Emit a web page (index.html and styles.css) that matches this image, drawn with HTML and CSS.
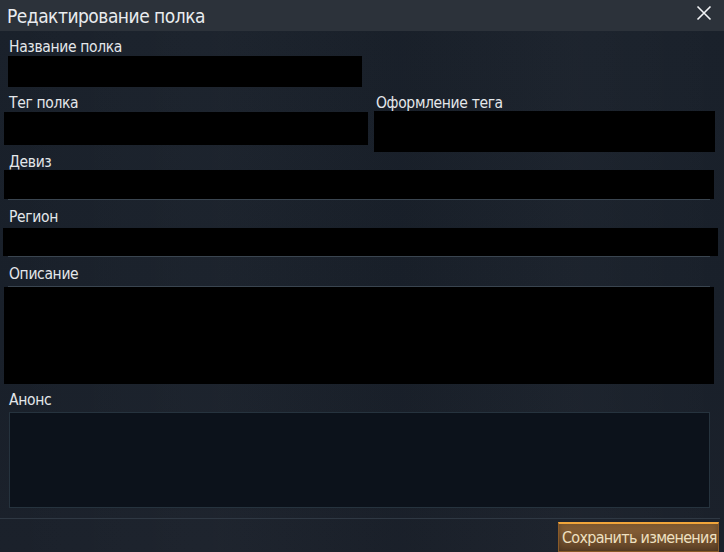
FILE: index.html
```html
<!DOCTYPE html>
<html lang="ru">
<head>
<meta charset="utf-8">
<title>Редактирование полка</title>
<link rel="stylesheet" href="styles.css">
</head>
<body>
<div class="dialog">
  <header class="titlebar">
    <h1 class="title">Редактирование полка</h1>
    <button class="close" aria-label="Закрыть">
      <svg width="16" height="16" viewBox="0 0 16 16"><path d="M1.5 1.5 L14.5 14.5 M14.5 1.5 L1.5 14.5" stroke="#f2f4f6" stroke-width="1.6" fill="none"/></svg>
    </button>
  </header>
  <main class="form">
    <div class="field f-name">
      <div class="label">Название полка</div>
      <div class="redact box-name"></div>
    </div>
    <div class="row">
      <div class="field f-tag">
        <div class="label">Тег полка</div>
        <div class="redact box-tag"></div>
      </div>
      <div class="field f-tagstyle">
        <div class="label">Оформление тега</div>
        <div class="redact box-tagstyle"></div>
      </div>
    </div>
    <div class="field f-motto">
      <div class="label">Девиз</div>
      <div class="redact box-motto"></div>
      <div class="underline"></div>
    </div>
    <div class="field f-region">
      <div class="label">Регион</div>
      <div class="redact box-region"></div>
      <div class="underline"></div>
    </div>
    <div class="field f-desc">
      <div class="label">Описание</div>
      <div class="underline"></div>
      <div class="redact box-desc"></div>
    </div>
    <div class="field f-announce">
      <div class="label">Анонс</div>
      <div class="textarea"></div>
    </div>
  </main>
  <footer class="footer">
    <button class="save">Сохранить изменения</button>
  </footer>
</div>
</body>
</html>
```
FILE: styles.css
```css
* { box-sizing: border-box; }
html, body {
  margin: 0;
  padding: 0;
  width: 724px;
  height: 552px;
  overflow: hidden;
}
body {
  font-family: "Liberation Sans Narrow", "DejaVu Sans Condensed", "Roboto", sans-serif;
  color: #e6e9ec;
  background: #19202a;
}
.dialog {
  width: 724px;
  height: 552px;
  background:
    linear-gradient(90deg, rgba(255,255,255,0) 0%, rgba(255,255,255,0.015) 30%, rgba(0,0,0,0.03) 55%, rgba(255,255,255,0.015) 80%, rgba(255,255,255,0) 100%),
    linear-gradient(180deg, #1a212b 0%, #19202a 60%, #1b212b 100%);
}
.titlebar {
  height: 31px;
  background: #2c323a;
  display: flex;
  align-items: center;
  justify-content: space-between;
  padding: 0 12px 0 7px;
}
.title {
  margin: 0;
  font-weight: normal;
  font-size: 19px;
  line-height: 24px;
  color: #e9ecef;
  letter-spacing: -0.5px;
}
.close {
  background: none;
  border: 0;
  padding: 0;
  width: 16px;
  height: 16px;
  display: flex;
  margin-top: -6px;
}
.label {
  font-size: 15.5px;
  line-height: 16px;
  height: 18px;
  padding-top: 2px;
  padding-left: 9px;
  color: #e4e7ea;
  white-space: nowrap;
  letter-spacing: -0.35px;
}
.redact { background: #000; }
.underline {
  height: 1px;
  background: #3a4550;
  margin: 0 14px 0 8px;
}

.f-name { padding-top: 6px; }
.f-name .label { margin-bottom: 1px; }
.box-name { height: 31px; margin-left: 8px; width: 354px; }

.row { display: flex; padding-top: 6px; }
.f-tag { width: 370px; }
.f-tag .label { margin-bottom: 1px; }
.box-tag { height: 33px; margin-left: 4px; width: 364px; }
.f-tagstyle { flex: 1; }
.f-tagstyle .label { padding-left: 6px; margin-bottom: 0; }
.box-tagstyle { height: 41px; margin-left: 4px; width: 341px; }

.f-motto .label { margin-bottom: 0; }
.box-motto { height: 29px; margin-left: 4px; width: 710px; }

.f-region { padding-top: 7px; }
.f-region .label { margin-bottom: 3px; }
.box-region { height: 28px; margin-left: 3px; width: 715px; }

.f-desc { padding-top: 7px; }
.f-desc .label { margin-bottom: 4px; }
.box-desc { height: 97px; margin-left: 4px; width: 710px; }

.f-announce { padding-top: 6px; }
.f-announce .label { margin-bottom: 4px; }
.textarea {
  height: 96px;
  margin-left: 9px;
  width: 701px;
  background: #0c121b;
  border: 1px solid #26333e;
}

.footer {
  margin-top: 10px;
  border-top: 1px solid #2f3843;
  width: 720px;
  padding-top: 3px;
  display: flex;
  justify-content: flex-end;
}
.save {
  height: 30px;
  width: 161px;
  margin-right: 1px;
  padding: 0 0 0 3px;
  font-family: inherit;
  font-size: 16px;
  line-height: 26px;
  letter-spacing: -0.7px;
  color: #efe0c0;
  text-align: left;
  white-space: nowrap;
  border: 1px solid #8a5a28;
  border-top: 2px solid #f0a53a;
  background: linear-gradient(180deg, #8a6236 0%, #7d5832 35%, #6c4c2c 70%, #5e4127 100%);
  box-shadow: inset 0 0 6px rgba(0,0,0,0.25);
}
```
